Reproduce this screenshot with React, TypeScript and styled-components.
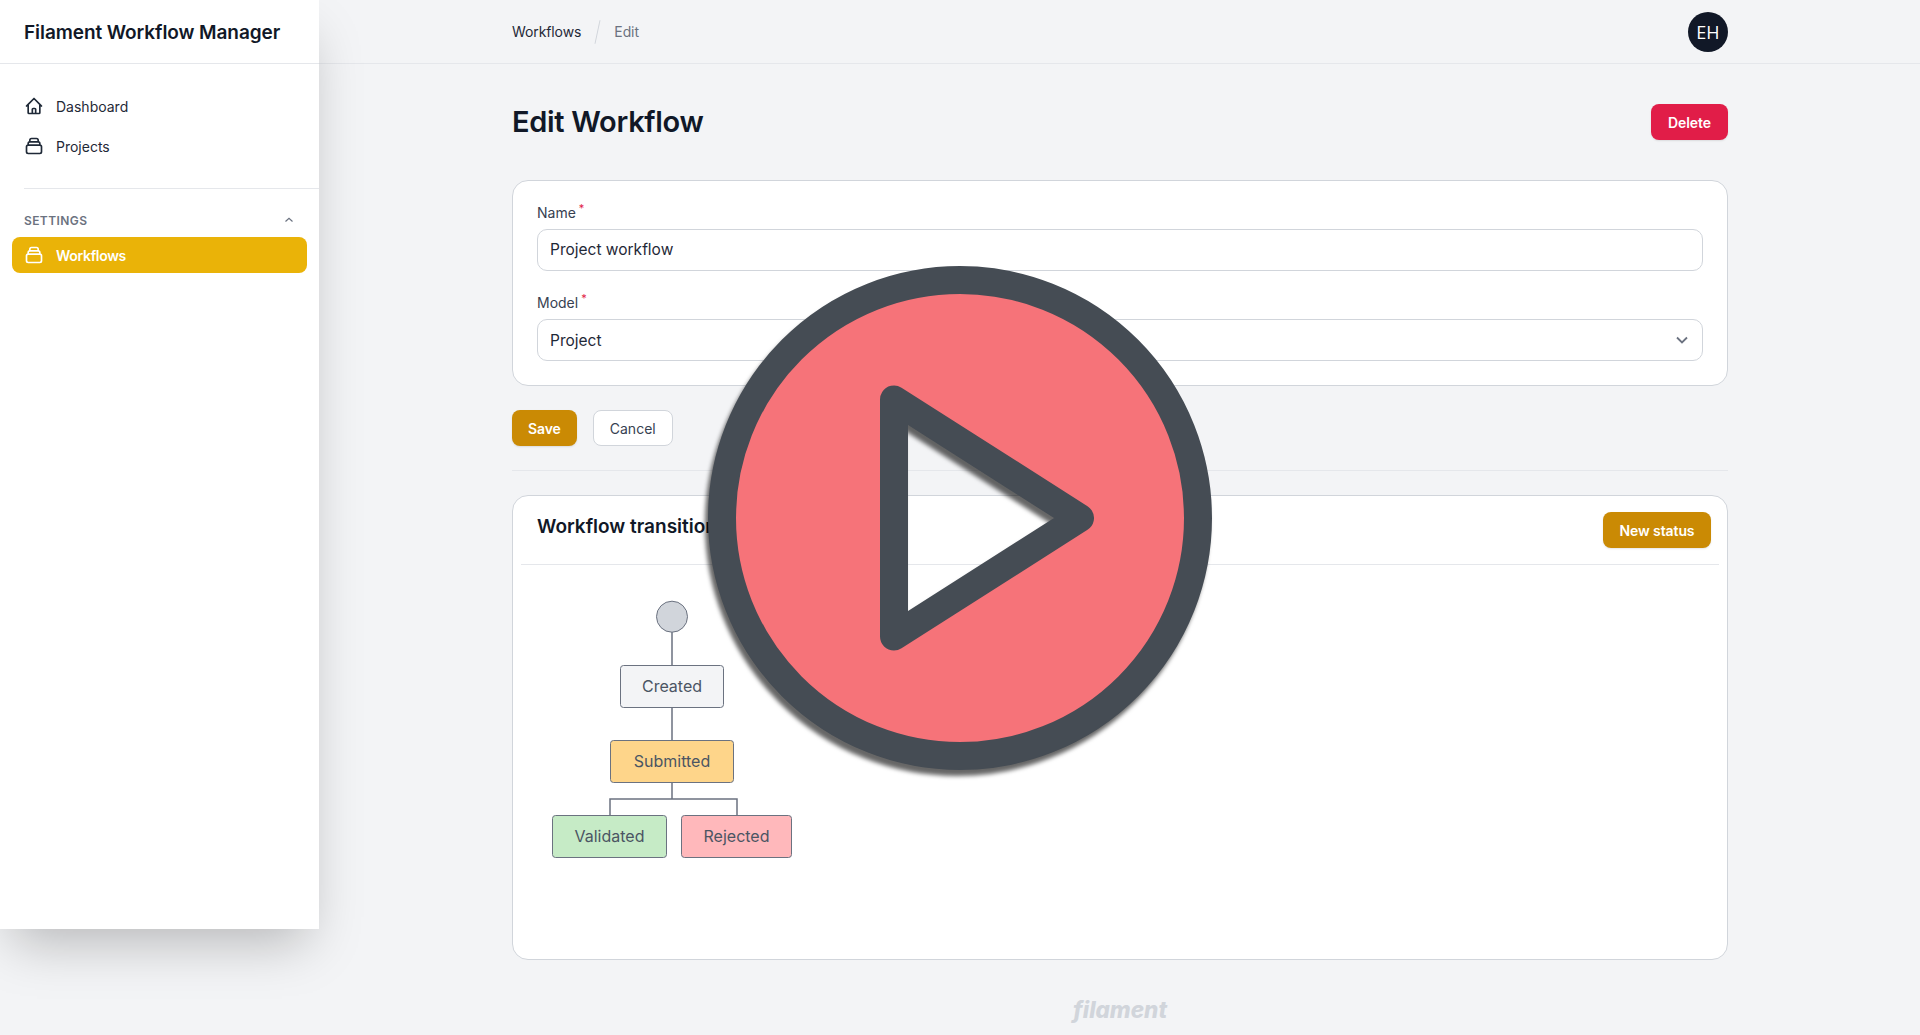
import React from 'react';
import styled, { createGlobalStyle } from 'styled-components';

const GlobalStyle = createGlobalStyle`
  html, body {
    margin: 0;
    height: 100%;
    overflow: hidden;
    background: #f3f4f6;
    font-family: 'Inter', 'Liberation Sans', sans-serif;
    color: #111827;
  }
  * { box-sizing: border-box; }
`;

const HomeIcon = () => (
  <NavIcon viewBox="0 0 24 24">
    <path d="M3 12l2-2m0 0l7-7 7 7M5 10v10a1 1 0 001 1h3m10-11l2 2m-2-2v10a1 1 0 01-1 1h-3m-6 0a1 1 0 001-1v-4a1 1 0 011-1h2a1 1 0 011 1v4a1 1 0 001 1m-6 0h6" />
  </NavIcon>
);

const CollectionIcon = () => (
  <NavIcon viewBox="0 0 24 24">
    <path d="M19 11H5m14 0a2 2 0 012 2v6a2 2 0 01-2 2H5a2 2 0 01-2-2v-6a2 2 0 012-2m14 0V9a2 2 0 00-2-2M5 11V9a2 2 0 012-2m0 0V5a2 2 0 012-2h6a2 2 0 012 2v2M7 7h10" />
  </NavIcon>
);

const Diagram = () => (
  <DiagramSvg viewBox="0 0 280 290">
    <g fill="none" stroke="#6b7280" strokeWidth="1.5">
      <path d="M132 42V76M132 117V151M132 192V209M70 226V209H197V226" />
    </g>
    <circle cx="132" cy="26.700" r="15.500" fill="#d1d5db" stroke="#6b7280" />
    <StateBox x="80.500" y="75.500" width="103" height="42" fill="#f3f4f6" />
    <StateLabel x="132" y="98">Created</StateLabel>
    <StateBox x="70.500" y="150.500" width="123" height="42" fill="#fed58a" />
    <StateLabel x="132" y="173">Submitted</StateLabel>
    <StateBox x="12.500" y="225.500" width="114" height="42" fill="#c6ebc6" />
    <StateLabel x="69.500" y="248">Validated</StateLabel>
    <StateBox x="141.500" y="225.500" width="110" height="42" fill="#ffb8bb" />
    <StateLabel x="196.500" y="248">Rejected</StateLabel>
  </DiagramSvg>
);

export default function App() {
  return (
    <>
      <GlobalStyle />
      <Shell>
        <Sidebar>
          <Brand>Filament Workflow Manager</Brand>
          <Nav>
            <NavItem>
              <HomeIcon />
              Dashboard
            </NavItem>
            <NavItem>
              <CollectionIcon />
              Projects
            </NavItem>
          </Nav>
          <NavDivider />
          <GroupHead>
            <GroupTitle>Settings</GroupTitle>
            <svg width="12" height="12" viewBox="0 0 12 12" fill="none" stroke="#6b7280" strokeWidth="1.2">
              <path d="M2.500 7.500L6 4.200l3.500 3.300" />
            </svg>
          </GroupHead>
          <NavItem $active>
            <CollectionIcon />
            Workflows
          </NavItem>
        </Sidebar>

        <Main>
          <TopBar>
            <Crumbs>
              <Crumb>Workflows</Crumb>
              <CrumbSlash />
              <Crumb $muted>Edit</Crumb>
            </Crumbs>
            <Avatar>EH</Avatar>
          </TopBar>

          <PageHead>
            <PageTitle>Edit Workflow</PageTitle>
            <DeleteButton $color="#e11d48">Delete</DeleteButton>
          </PageHead>

          <FormCard>
            <Field>
              <Label>
                Name<Req>*</Req>
              </Label>
              <TextInput defaultValue="Project workflow" />
            </Field>
            <Field>
              <Label>
                Model<Req>*</Req>
              </Label>
              <SelectBox>
                Project
                <svg width="24" height="24" viewBox="0 0 24 24" fill="none" stroke="#6b7280" strokeWidth="1.8">
                  <path d="M7 9.500l5 5 5-5" />
                </svg>
              </SelectBox>
            </Field>
          </FormCard>

          <Actions>
            <Button $color="#ca8a04">Save</Button>
            <OutlineButton>Cancel</OutlineButton>
          </Actions>

          <Rule />

          <DiagramCard>
            <DiagramHead>
              <SectionTitle>Workflow transitions</SectionTitle>
              <NewStatusButton $color="#ca8a04">New status</NewStatusButton>
            </DiagramHead>
            <DiagramBody>
              <Diagram />
            </DiagramBody>
          </DiagramCard>

          <Footer>filament</Footer>
        </Main>
      </Shell>

      <PlayOverlay viewBox="0 0 520 520">
        <path
          d="M260 22a238 238 0 1 0 0 476a238 238 0 1 0 0-476ZM194 141.500V378.500L380 260Z"
          fill="#f67379"
          fillRule="evenodd"
          stroke="#454c54"
          strokeWidth="28"
          strokeLinejoin="round"
        />
      </PlayOverlay>
    </>
  );
}

const Shell = styled.div`
  display: flex;
  align-items: flex-start;
  height: 1035px;
`;

const Sidebar = styled.aside`
  flex: 0 0 319px;
  height: 929px;
  background: #fff;
  box-shadow: 0 25px 50px -12px rgba(0, 0, 0, 0.25);
  position: relative;
  z-index: 1;
`;

const Brand = styled.div`
  height: 64px;
  padding: 1px 0 0 24px;
  display: flex;
  align-items: center;
  font-size: 19px;
  font-weight: 600;
  letter-spacing: -0.08px;
  border-bottom: 1px solid #e5e7eb;
  color: #111827;
`;

const Nav = styled.nav`
  display: flex;
  flex-direction: column;
  gap: 4px;
  padding-top: 24px;
`;

const NavItem = styled.a<{ $active?: boolean }>`
  display: flex;
  align-items: center;
  gap: 12px;
  height: 36px;
  margin: 0 12px;
  padding: 0 12px;
  border-radius: 8px;
  font-size: 14px;
  font-weight: ${(p) => (p.$active ? 600 : 400)};
  letter-spacing: ${(p) => (p.$active ? '-0.3px' : '0')};
  color: ${(p) => (p.$active ? '#fff' : '#1f2937')};
  background: ${(p) => (p.$active ? '#eab308' : 'transparent')};
`;

const NavIcon = styled.svg`
  width: 20px;
  height: 20px;
  flex: none;
  fill: none;
  stroke: currentColor;
  stroke-width: 2;
  stroke-linecap: round;
  stroke-linejoin: round;
`;

const NavDivider = styled.div`
  height: 1px;
  margin: 24px 0 0 24px;
  background: #e5e7eb;
`;

const GroupHead = styled.div`
  display: flex;
  align-items: center;
  justify-content: space-between;
  height: 16px;
  margin: 23px 24px 9px;
`;

const GroupTitle = styled.span`
  font-size: 12px;
  font-weight: 600;
  letter-spacing: 0.4px;
  text-transform: uppercase;
  color: #6b7280;
`;

const Main = styled.main`
  flex: 1;
  padding: 0 192px 0 193px;
`;

const TopBar = styled.header`
  height: 64px;
  margin: 0 -192px 0 -193px;
  padding: 0 192px 0 193px;
  display: flex;
  align-items: center;
  justify-content: space-between;
  border-bottom: 1px solid #e5e7eb;
`;

const Crumbs = styled.div`
  display: flex;
  align-items: center;
  gap: 16px;
`;

const Crumb = styled.span<{ $muted?: boolean }>`
  font-size: 14px;
  letter-spacing: -0.1px;
  color: ${(p) => (p.$muted ? '#6b7280' : '#1f2937')};
`;

const CrumbSlash = styled.span`
  width: 1px;
  height: 24px;
  background: #d1d5db;
  transform: rotate(12deg);
`;

const Avatar = styled.div`
  width: 40px;
  height: 40px;
  border-radius: 50%;
  background: #111827;
  color: #fff;
  display: flex;
  align-items: center;
  justify-content: center;
  font-family: 'Open Sans', sans-serif;
  font-size: 18px;
`;

const PageHead = styled.div`
  display: flex;
  align-items: center;
  justify-content: space-between;
  padding-top: 40px;
  margin-bottom: 40px;
  height: 76px;
`;

const PageTitle = styled.h1`
  margin: -2px 0 0;
  font-size: 29px;
  font-weight: 600;
  letter-spacing: -0.3px;
  color: #111827;
`;

const Button = styled.button<{ $color: string }>`
  height: 36px;
  padding: 0 16px;
  border: 0;
  border-radius: 8px;
  background: ${(p) => p.$color};
  color: #fff;
  font-family: inherit;
  font-size: 14px;
  font-weight: 600;
  letter-spacing: -0.1px;
  box-shadow: 0 1px 2px rgba(0, 0, 0, 0.1);
`;

const DeleteButton = styled(Button)`
  min-width: 77px;
`;

const NewStatusButton = styled(Button)`
  min-width: 108px;
`;

const OutlineButton = styled.button`
  height: 36px;
  width: 80px;
  padding: 0;
  border: 1px solid #d1d5db;
  border-radius: 8px;
  background: #fff;
  color: #374151;
  font-family: inherit;
  font-size: 14px;
  font-weight: 400;
`;

const FormCard = styled.section`
  display: flex;
  flex-direction: column;
  gap: 22px;
  height: 206px;
  padding: 22px 24px 23px;
  background: #fff;
  border: 1px solid #d1d5db;
  border-radius: 16px;
`;

const Field = styled.div`
  display: flex;
  flex-direction: column;
  gap: 6px;
`;

const Label = styled.label`
  height: 20px;
  font-size: 14px;
  line-height: 20px;
  font-weight: 400;
  color: #374151;
`;

const Req = styled.sup`
  margin-left: 3px;
  font-size: 11px;
  line-height: 0;
  color: #e11d48;
`;

const TextInput = styled.input`
  width: 100%;
  height: 42px;
  padding: 0 12px 1px;
  border: 1px solid #d1d5db;
  border-radius: 10px;
  outline: none;
  font-family: inherit;
  font-size: 15.5px;
  color: #1f2937;
`;

const SelectBox = styled.div`
  display: flex;
  align-items: center;
  justify-content: space-between;
  height: 42px;
  padding: 0 8px 0 12px;
  border: 1px solid #d1d5db;
  border-radius: 10px;
  font-size: 15.5px;
  color: #1f2937;
`;

const Actions = styled.div`
  display: flex;
  gap: 16px;
  margin-top: 24px;
`;

const Rule = styled.hr`
  height: 1px;
  width: 100%;
  margin: 24px 0;
  border: 0;
  background: #e5e7eb;
`;

const DiagramCard = styled.section`
  height: 465px;
  background: #fff;
  border: 1px solid #d1d5db;
  border-radius: 16px;
`;

const DiagramHead = styled.div`
  display: flex;
  align-items: flex-start;
  justify-content: space-between;
  height: 69px;
  margin: 0 8px;
  padding: 16px 8px 0 16px;
  border-bottom: 1px solid #e5e7eb;
`;

const SectionTitle = styled.h2`
  margin: 1px 0 0;
  font-size: 19px;
  line-height: 28px;
  font-weight: 600;
  color: #111827;
`;

const DiagramBody = styled.div`
  padding: 25px 0 0 27px;
`;

const DiagramSvg = styled.svg`
  display: block;
  width: 280px;
  height: 290px;
`;

const StateBox = styled.rect`
  rx: 3px;
  stroke: #6b7280;
`;

const StateLabel = styled.text`
  font-size: 16px;
  text-anchor: middle;
  dominant-baseline: middle;
  fill: #4b5563;
`;

const Footer = styled.footer`
  margin-top: 36px;
  text-align: center;
  font-size: 22.500px;
  line-height: 28px;
  font-weight: 800;
  font-style: italic;
  color: #d1d5db;
`;

const PlayOverlay = styled.svg`
  position: absolute;
  left: 700px;
  top: 257.500px;
  z-index: 2;
  width: 520px;
  height: 520px;
  overflow: visible;
  filter: drop-shadow(-3px 6px 2px rgba(0, 0, 0, 0.6));
`;
